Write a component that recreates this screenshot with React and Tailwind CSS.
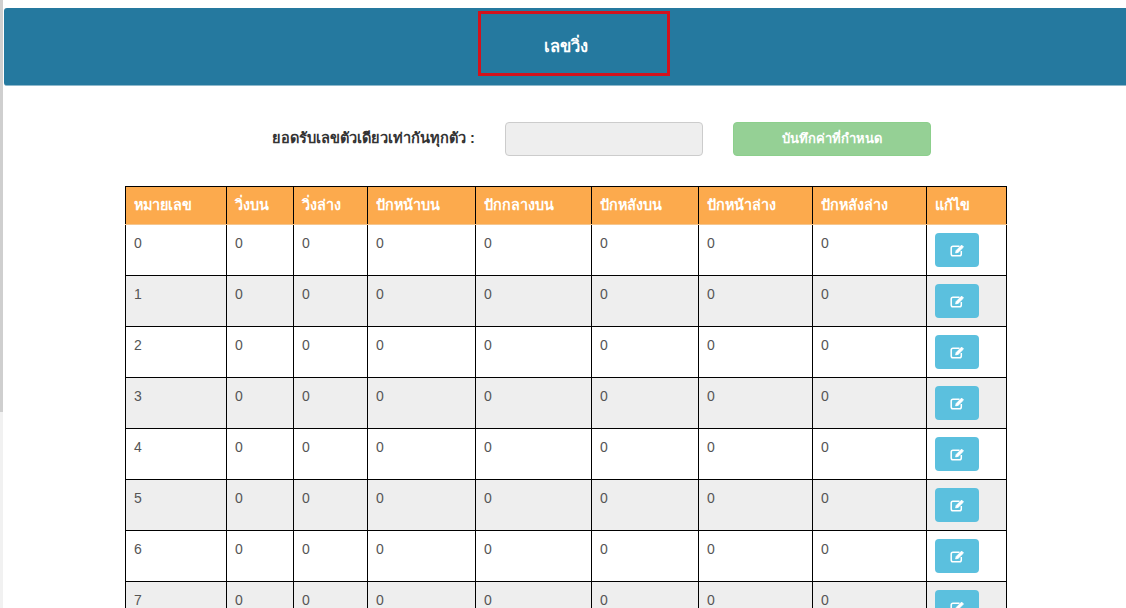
const heads = ["หมายเลข", "วิ่งบน", "วิ่งล่าง", "ปักหน้าบน", "ปักกลางบน", "ปักหลังบน", "ปักหน้าล่าง", "ปักหลังล่าง", "แก้ไข"];
const widths = ["w-[101px]", "w-[67px]", "w-[74px]", "w-[108px]", "w-[116px]", "w-[107px]", "w-[114px]", "w-[114px]", "w-[80px]"];
const rows = [0, 1, 2, 3, 4, 5, 6, 7];

function EditIcon() {
  return (
    <svg width="15" height="13" viewBox="0 0 15 13" fill="none" stroke="currentColor" strokeWidth="1.5">
      <path d="M9.5 2.2H3a1.8 1.8 0 0 0-1.8 1.8v6A1.8 1.8 0 0 0 3 11.8h6.5a1.8 1.8 0 0 0 1.8-1.8V7" />
      <path d="M5.6 8.9l.6-2.4L11.6 1.1l1.9 1.9-5.4 5.4z" fill="currentColor" strokeWidth="0.8" />
    </svg>
  );
}

export default function App() {
  return (
    <div className="flex h-[608px] w-[1126px] overflow-hidden bg-white font-['Liberation_Sans',Arial,sans-serif] text-[14px] text-[#555]">
      <div className="flex w-[3px] flex-col">
        <div className="h-[412px] bg-[#cfcfcf]" />
        <div className="flex-1 bg-[#f1f1f1]" />
      </div>
      <div className="min-w-0 flex-1 pt-2 pl-px">
        <header className="flex h-[78px] items-start rounded-l-[3px] border-b border-[#8fb9cc] bg-[#25799f] pt-[3px] pl-[474px]">
          <h1 className="flex h-[65px] w-[192px] items-center justify-center border-[3px] border-[#d3121c] pt-[5px] pr-[16px] text-[16.5px] font-bold text-white">
            เลขวิ่ง
          </h1>
        </header>

        <div className="mt-9 flex h-[34px] items-center">
          <label className="ml-[268px] w-[233px] text-[14.55px] font-bold text-[#333]">ยอดรับเลขตัวเดียวเท่ากันทุกตัว :</label>
          <input
            disabled
            className="h-[34px] w-[198px] rounded border border-[#ccc] bg-[#eee]"
          />
          <button className="ml-[30px] h-[34px] w-[198px] rounded border border-[#8ccf8c] bg-[#95d095] text-[13px] font-bold text-white">
            บันทึกค่าที่กำหนด
          </button>
        </div>

        <table className="mt-[30px] ml-[121px] w-[881px] table-fixed border-collapse border border-black">
          <colgroup>
            {widths.map((w, i) => (
              <col key={i} className={w} />
            ))}
          </colgroup>
          <thead>
            <tr className="h-[38px] bg-[#fcaa4d]">
              {heads.map((h) => (
                <th key={h} className="border border-black border-b-[#f5c68f] pr-2 pl-[8px] text-left align-middle text-[14.4px] font-bold text-white">
                  {h}
                </th>
              ))}
            </tr>
          </thead>
          <tbody>
            {rows.map((r) => (
              <tr key={r} className={`h-[51px] ${r % 2 ? "bg-[#eee]" : "bg-white"}`}>
                {[r, 0, 0, 0, 0, 0, 0, 0].map((v, i) => (
                  <td key={i} className="border border-black pt-[8px] pr-2 pl-[8px] align-top leading-5">
                    {v}
                  </td>
                ))}
                <td className="border border-black pt-[8px] pl-2 align-top">
                  <button className="flex h-[34px] w-[44px] items-center justify-center rounded bg-[#5bc0de] text-white">
                    <EditIcon />
                  </button>
                </td>
              </tr>
            ))}
          </tbody>
        </table>
      </div>
    </div>
  );
}
